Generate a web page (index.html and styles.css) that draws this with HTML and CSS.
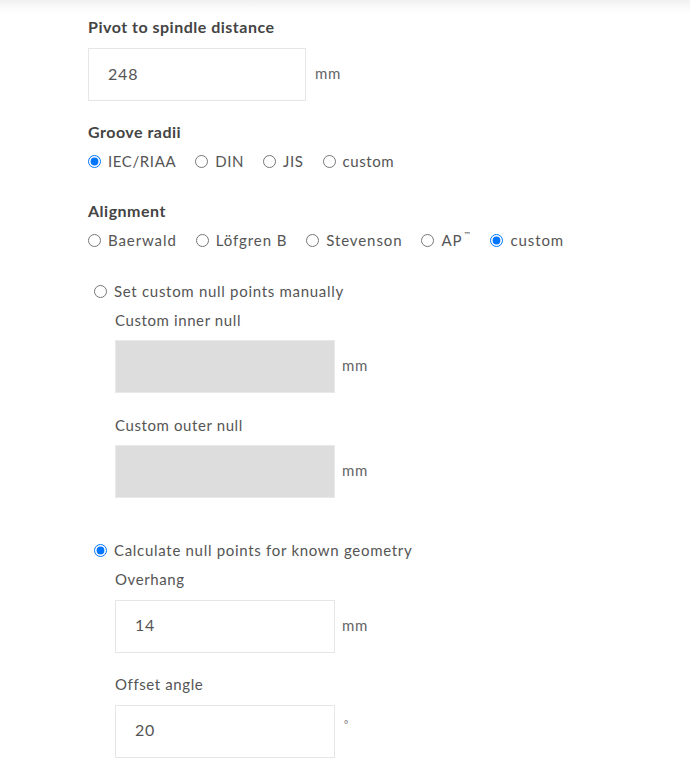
FILE: index.html
```html
<!DOCTYPE html>
<html lang="en">
<head>
<meta charset="utf-8">
<title>Alignment settings</title>
<link rel="stylesheet" href="styles.css">
</head>
<body>
<div class="page">
  <form class="form">
    <div class="field">
      <div class="heading">Pivot to spindle distance</div>
      <div class="input-row">
        <div class="box">248</div>
        <span class="unit">mm</span>
      </div>
    </div>

    <div class="field field-radios">
      <div class="heading">Groove radii</div>
      <div class="radios radios-groove">
        <label class="opt"><input type="radio" name="groove" checked><span>IEC/RIAA</span></label>
        <label class="opt"><input type="radio" name="groove"><span>DIN</span></label>
        <label class="opt"><input type="radio" name="groove"><span>JIS</span></label>
        <label class="opt"><input type="radio" name="groove"><span>custom</span></label>
      </div>
    </div>

    <div class="field field-radios">
      <div class="heading">Alignment</div>
      <div class="radios">
        <label class="opt"><input type="radio" name="align"><span>Baerwald</span></label>
        <label class="opt"><input type="radio" name="align"><span>Löfgren B</span></label>
        <label class="opt"><input type="radio" name="align"><span>Stevenson</span></label>
        <label class="opt"><input type="radio" name="align"><span>AP<sup class="tm">™</sup></span></label>
        <label class="opt"><input type="radio" name="align" checked><span>custom</span></label>
      </div>
    </div>

    <div class="custom">
      <label class="opt sub-opt"><input type="radio" name="mode"><span>Set custom null points manually</span></label>
      <div class="sub">
        <div class="sub-label">Custom inner null</div>
        <div class="input-row">
          <div class="box box-sub box-disabled"></div>
          <span class="unit unit-sub">mm</span>
        </div>
        <div class="sub-label sub-gap">Custom outer null</div>
        <div class="input-row">
          <div class="box box-sub box-disabled"></div>
          <span class="unit unit-sub">mm</span>
        </div>
      </div>

      <label class="opt sub-opt opt-second"><input type="radio" name="mode" checked><span>Calculate null points for known geometry</span></label>
      <div class="sub sub-geometry">
        <div class="sub-label">Overhang</div>
        <div class="input-row">
          <div class="box box-sub">14</div>
          <span class="unit unit-sub">mm</span>
        </div>
        <div class="sub-label sub-gap">Offset angle</div>
        <div class="input-row">
          <div class="box box-sub">20</div>
          <span class="unit unit-sub unit-deg">°</span>
        </div>
      </div>
    </div>
  </form>
</div>
</body>
</html>
```
FILE: styles.css
```css
html, body {
  margin: 0;
  padding: 0;
  background: #ffffff;
}

.page {
  min-height: 773px;
  background: linear-gradient(to bottom, #f1f1f1 0px, #fbfbfb 8px, #ffffff 14px);
  font-family: Lato, "Noto Sans", "Liberation Sans", sans-serif;
  color: #555555;
}

.form {
  margin: 0;
  padding: 17px 0 0 88px;
  display: flex;
  flex-direction: column;
}

.heading {
  font-size: 16px;
  font-weight: 700;
  line-height: 20px;
  color: #444444;
  letter-spacing: 0.5px;
}

.field-radios {
  margin-top: 21px;
}

.field-radios + .field-radios {
  margin-top: 30px;
}

.input-row {
  display: flex;
  align-items: center;
  margin-top: 11px;
}

.box {
  box-sizing: border-box;
  width: 218px;
  height: 53px;
  border: 1px solid #e6e6e6;
  padding: 0 19px 3px;
  display: flex;
  align-items: center;
  font-size: 16px;
  color: #555555;
  letter-spacing: 0.8px;
}

.unit {
  margin-left: 9px;
  padding-bottom: 3px;
  font-size: 15px;
  color: #666666;
  letter-spacing: 0.6px;
}

.radios {
  display: flex;
  margin-top: 9px;
  gap: 19px;
}

.opt {
  display: flex;
  align-items: center;
  font-size: 15px;
  line-height: 20px;
  color: #555555;
  letter-spacing: 0.9px;
}

.radios-groove .opt {
  letter-spacing: 0.6px;
}

.opt input {
  margin: 0 7px 0 0;
  width: 13px;
  height: 13px;
  accent-color: #0075ff;
}

.tm {
  font-family: "DejaVu Sans", sans-serif;
  font-size: 8px;
  vertical-align: top;
  line-height: 12px;
  margin-left: 1px;
  letter-spacing: 0;
}

.custom {
  padding-left: 6px;
  margin-top: 31px;
  display: flex;
  flex-direction: column;
}

.sub-opt {
  letter-spacing: 0.7px;
}

.sub {
  padding-left: 21px;
  display: flex;
  flex-direction: column;
}

.sub-label {
  margin-top: 9px;
  font-size: 15px;
  line-height: 20px;
  color: #555555;
  letter-spacing: 0.6px;
}

.sub-label.sub-gap {
  margin-top: 22px;
}

.input-row .box-sub {
  width: 220px;
}

.sub .input-row {
  margin-top: 10px;
}

.sub-geometry .input-row {
  margin-top: 11px;
}

.sub-geometry .sub-label.sub-gap {
  margin-top: 21px;
}

.box-sub {
  padding-bottom: 4px;
}

.box-disabled {
  background: #dddddd;
  border-color: #e9e9e9;
}

.unit-sub {
  margin-left: 7px;
}

.unit-deg {
  font-size: 10px;
  align-self: flex-start;
  margin-top: 13px;
  margin-left: 9px;
}

.opt-second {
  margin-top: 42px;
}
```
